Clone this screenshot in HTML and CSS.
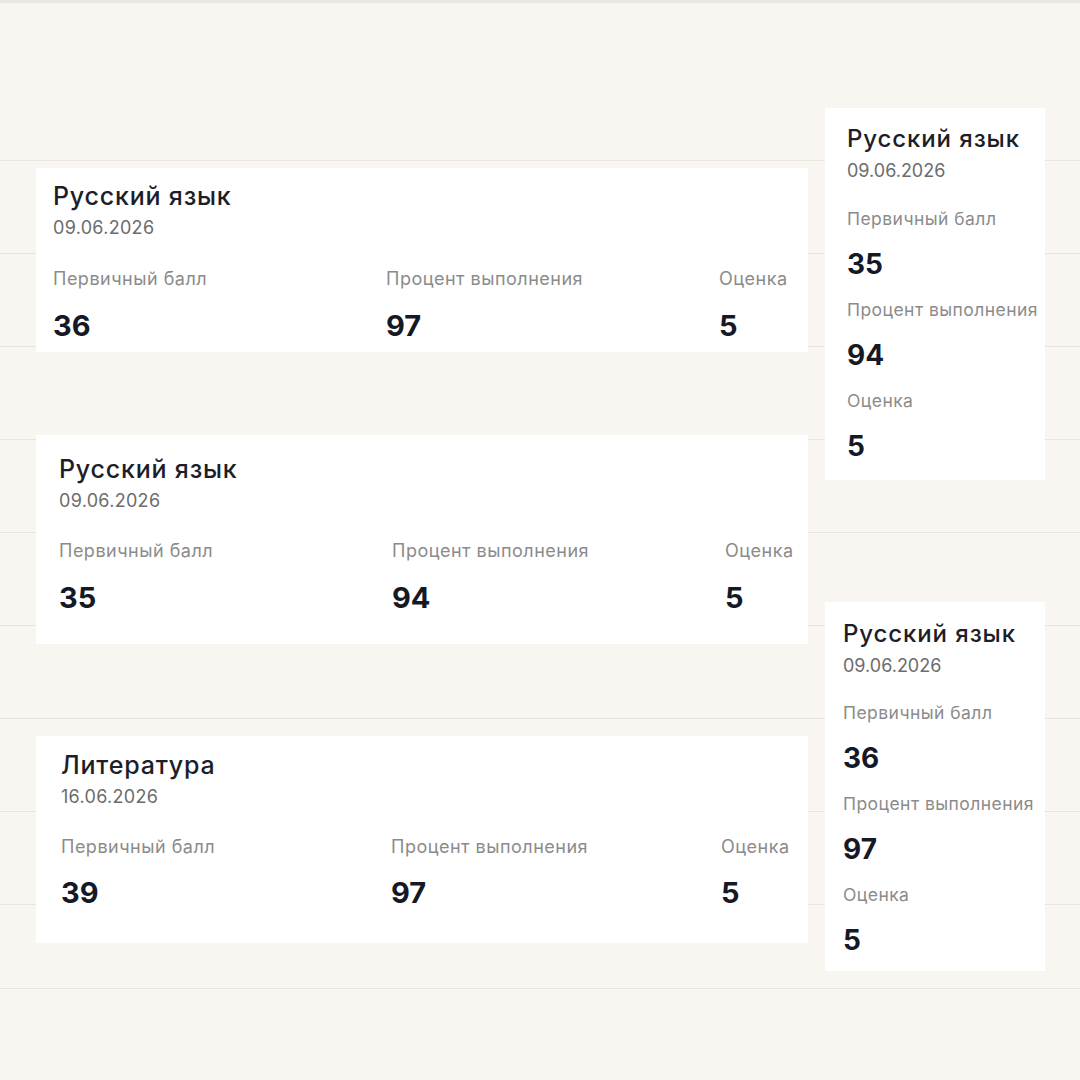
FILE: index.html
```html
<!DOCTYPE html>
<html lang="ru">
<head>
    <meta charset="UTF-8">
    <meta name="viewport" content="width=device-width, initial-scale=1.0">
    <title>Результаты экзаменов</title>
    <link rel="stylesheet" href="styles.css">
</head>
<body>
    <div class="board">
        <!-- lined sheet underneath the cards -->
        <div class="sheet">
            <div class="row row-first"></div>
            <div class="row"></div>
            <div class="row"></div>
            <div class="row"></div>
            <div class="row"></div>
            <div class="row"></div>
            <div class="row"></div>
            <div class="row"></div>
            <div class="row"></div>
            <div class="row row-last"></div>
        </div>

        <div class="card card-wide card-a">
            <div class="title">Русский язык</div>
            <div class="date">09.06.2026</div>
            <div class="stats">
                <div class="stat">
                    <span class="label">Первичный балл</span>
                    <span class="value">36</span>
                </div>
                <div class="stat">
                    <span class="label">Процент выполнения</span>
                    <span class="value">97</span>
                </div>
                <div class="stat">
                    <span class="label">Оценка</span>
                    <span class="value">5</span>
                </div>
            </div>
        </div>

        <div class="card card-wide card-b">
            <div class="title">Русский язык</div>
            <div class="date">09.06.2026</div>
            <div class="stats">
                <div class="stat">
                    <span class="label">Первичный балл</span>
                    <span class="value">35</span>
                </div>
                <div class="stat">
                    <span class="label">Процент выполнения</span>
                    <span class="value">94</span>
                </div>
                <div class="stat">
                    <span class="label">Оценка</span>
                    <span class="value">5</span>
                </div>
            </div>
        </div>

        <div class="card card-wide card-c">
            <div class="title">Литература</div>
            <div class="date">16.06.2026</div>
            <div class="stats">
                <div class="stat">
                    <span class="label">Первичный балл</span>
                    <span class="value">39</span>
                </div>
                <div class="stat">
                    <span class="label">Процент выполнения</span>
                    <span class="value">97</span>
                </div>
                <div class="stat">
                    <span class="label">Оценка</span>
                    <span class="value">5</span>
                </div>
            </div>
        </div>

        <div class="card card-narrow card-d">
            <div class="title">Русский язык</div>
            <div class="date">09.06.2026</div>
            <div class="stats">
                <div class="stat">
                    <span class="label">Первичный балл</span>
                    <span class="value">35</span>
                </div>
                <div class="stat">
                    <span class="label">Процент выполнения</span>
                    <span class="value">94</span>
                </div>
                <div class="stat">
                    <span class="label">Оценка</span>
                    <span class="value">5</span>
                </div>
            </div>
        </div>

        <div class="card card-narrow card-e">
            <div class="title">Русский язык</div>
            <div class="date">09.06.2026</div>
            <div class="stats">
                <div class="stat">
                    <span class="label">Первичный балл</span>
                    <span class="value">36</span>
                </div>
                <div class="stat">
                    <span class="label">Процент выполнения</span>
                    <span class="value">97</span>
                </div>
                <div class="stat">
                    <span class="label">Оценка</span>
                    <span class="value">5</span>
                </div>
            </div>
        </div>
    </div>
</body>
</html>
```

FILE: styles.css
```css
*{
    padding: 0;
    margin: 0;
    box-sizing: border-box;
}
body {
    background: #f9f6f1;
    font-family: Inter, "Noto Sans", "Liberation Sans", sans-serif;
}
.board {
    position: relative;
    width: 1080px;
    height: 1080px;
    overflow: hidden;
}
.sheet {
    display: flex;
    flex-direction: column;
    border-top: 3px solid #ebe7e1;
}
.row {
    height: 93px;
    border-bottom: 1px solid #e8e4de;
}
.row-first {
    height: 158px;
}
.row-last {
    height: 84px;
}

/* pasted cards */
.card {
    position: absolute;
    background: #fff;
    overflow: hidden;
    display: flex;
    flex-direction: column;
}
.title {
    font-size: 25px;
    line-height: 30px;
    font-weight: 500;
    letter-spacing: 0.8px;
    color: #1c1e29;
    white-space: nowrap;
}
.date {
    font-size: 18px;
    line-height: 34px;
    letter-spacing: 0.3px;
    color: #6c6c6c;
}
.stats {
    display: grid;
    margin-top: 21px;
}
.stat {
    display: flex;
    flex-direction: column;
    row-gap: 18px;
}
.label {
    font-size: 18px;
    line-height: 24px;
    letter-spacing: 0.5px;
    color: #8b8b8b;
    white-space: nowrap;
}
.value {
    font-size: 29px;
    line-height: 34px;
    font-weight: 700;
    color: #151925;
}
.card-wide {
    width: 772px;
}
.card-wide .stats {
    grid-template-columns: 333px 333px 1fr;
}
.card-narrow {
    width: 220px;
}
.card-narrow .stats {
    grid-template-columns: 1fr;
    row-gap: 17px;
    margin-top: 19px;
}
.card-narrow .stat {
    row-gap: 16px;
}
.card-narrow .title {
    font-size: 24px;
    letter-spacing: 0.9px;
}
.card-narrow .date {
    letter-spacing: 0;
}
.card-narrow .label {
    font-size: 17.5px;
    letter-spacing: 0.45px;
}
.card-narrow .value {
    font-size: 28px;
}

.card-a {
    left: 36px;
    top: 168px;
    height: 184px;
    padding: 13px 0 0 17px;
}
.card-a .stats {
    margin-top: 22px;
}
.card-b {
    left: 36px;
    top: 435px;
    height: 209px;
    padding: 19px 0 0 23px;
}
.card-c {
    left: 36px;
    top: 736px;
    height: 207px;
    padding: 14px 0 0 25px;
}
.card-c .stats {
    grid-template-columns: 330px 330px 1fr;
}
.card-c .stat {
    row-gap: 17px;
}
.card-d {
    left: 825px;
    top: 108px;
    height: 372px;
    padding: 16px 0 0 22px;
}
.card-e {
    left: 825px;
    top: 602px;
    height: 369px;
    padding: 17px 0 0 18px;
}
.card-e .stats {
    margin-top: 18px;
}
```
